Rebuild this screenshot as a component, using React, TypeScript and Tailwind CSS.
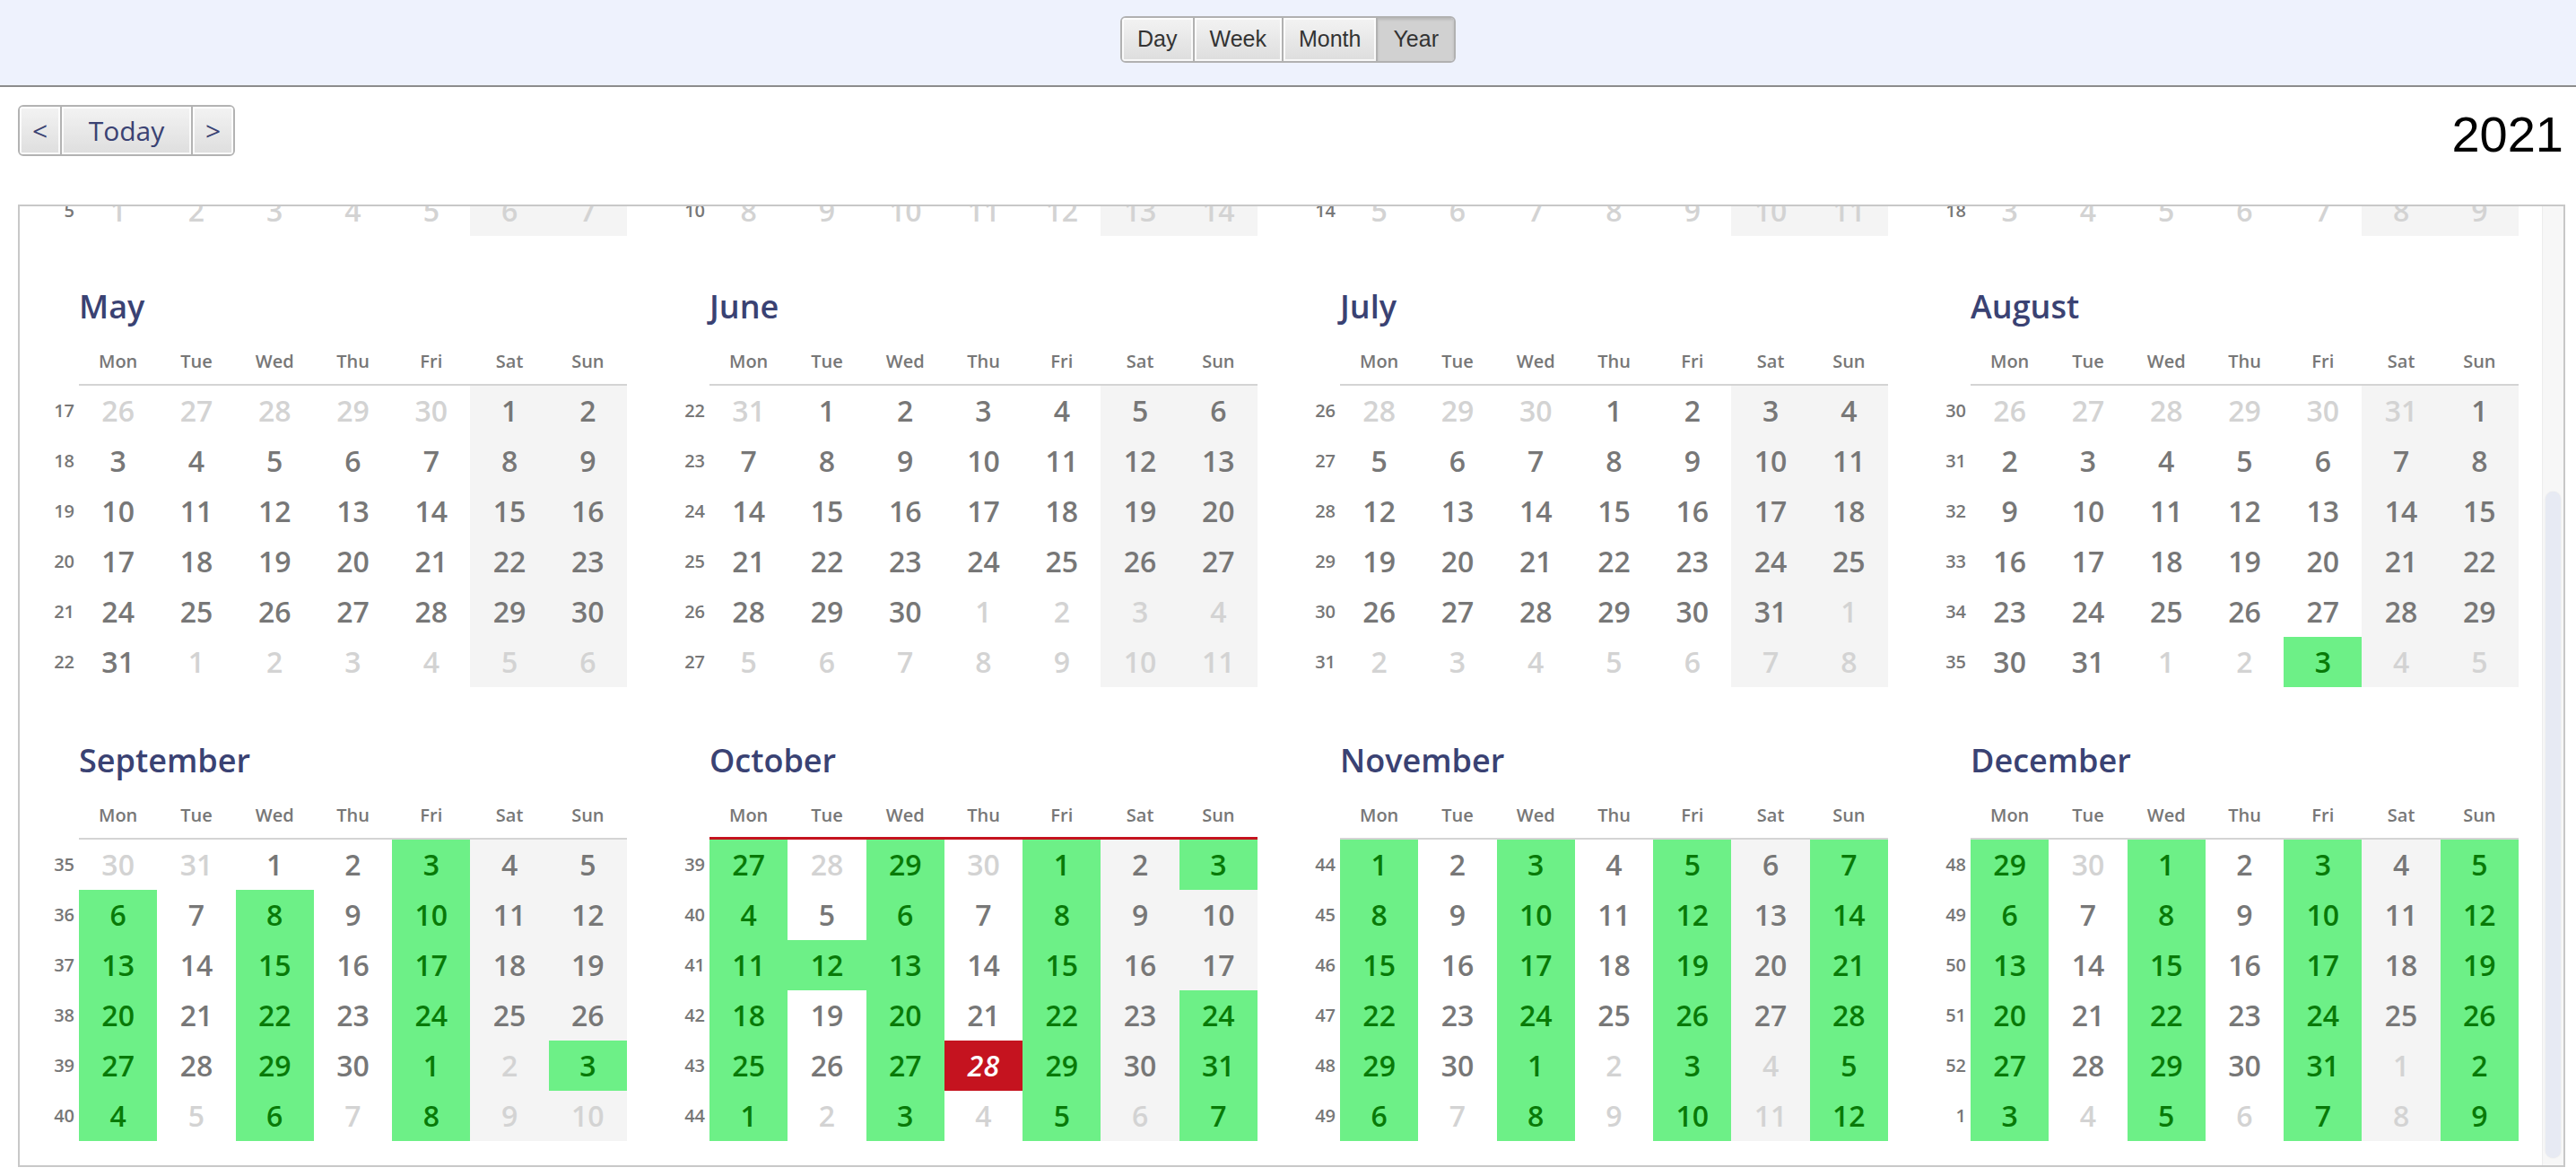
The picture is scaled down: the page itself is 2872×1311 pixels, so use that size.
import { useLayoutEffect, useRef } from 'react';

const MONTHS = ['January', 'February', 'March', 'April', 'May', 'June', 'July', 'August', 'September', 'October', 'November', 'December'];
const WEEKDAYS = ['Mon', 'Tue', 'Wed', 'Thu', 'Fri', 'Sat', 'Sun'];
const YEAR = 2021;
const DAY = 86400000;
const TODAY = Date.UTC(2021, 9, 28);

// iso week of a utc timestamp
function isoWeek(ts: number) {
  const d = new Date(ts);
  const dow = d.getUTCDay() || 7;
  const thu = new Date(ts + (4 - dow) * DAY);
  const start = Date.UTC(thu.getUTCFullYear(), 0, 1);
  return Math.ceil(((thu.getTime() - start) / DAY + 1) / 7);
}

// days with a booking
function isBooked(ts: number) {
  const d = new Date(ts);
  const dow = d.getUTCDay();
  if (ts === Date.UTC(2021, 8, 3) || ts === Date.UTC(2021, 9, 3) || ts === Date.UTC(2021, 9, 12)) return true;
  if (ts >= Date.UTC(2021, 8, 6) && ts <= Date.UTC(2021, 9, 22)) return dow === 1 || dow === 3 || dow === 5;
  if (ts >= Date.UTC(2021, 9, 24)) return dow === 1 || dow === 3 || dow === 5 || dow === 0;
  return false;
}

function buildWeeks(month: number) {
  const first = Date.UTC(YEAR, month, 1);
  const dow = new Date(first).getUTCDay() || 7;
  const start = first - (dow - 1) * DAY;
  const weeks: { week: number; days: number[] }[] = [];
  for (let w = 0; w < 6; w++) {
    const days: number[] = [];
    for (let i = 0; i < 7; i++) days.push(start + (w * 7 + i) * DAY);
    weeks.push({ week: isoWeek(days[0]), days });
  }
  return weeks;
}

function Month({ month }: { month: number }) {
  const weeks = buildWeeks(month);
  const hasToday = weeks.some((w) => w.days.includes(TODAY));

  return (
    <div className={`w-[703px] shrink-0 ${month >= 4 && month < 8 ? 'pt-[54px]' : 'pt-[57px]'}`}>
      <div className="pl-[66px] h-[49px] text-[36px] leading-[49px] font-semibold text-[#3a4273]">{MONTHS[month]}</div>
      <div className="ml-[66px] mt-[23px] mb-[12px] w-[611px] h-[27px] grid grid-cols-7 text-[20px] leading-[27px] font-semibold text-[#777]">
        {WEEKDAYS.map((d) => (
          <div key={d} className="text-center">{d}</div>
        ))}
      </div>
      {hasToday ? (
        <div className="ml-[66px] w-[611px] h-[3px] -mt-px bg-[#c5131f]" />
      ) : (
        <div className="ml-[66px] w-[611px] h-[2px] bg-[#d4d4d4]" />
      )}
      {weeks.map((w) => (
        <div key={w.days[0]} className="flex h-[56px]">
          <div className="w-[66px] pr-[5px] flex items-center justify-end text-[20px] font-semibold text-[#777]">{w.week}</div>
          <div className="w-[611px] grid grid-cols-7">
            {w.days.map((ts, i) => {
              const d = new Date(ts);
              const inMonth = d.getUTCMonth() === month;
              const weekend = i >= 5;
              const today = ts === TODAY;
              const booked = isBooked(ts);
              let cls = 'bg-white ' + (inMonth ? 'text-[#777]' : 'text-[#d3d3d3]');
              if (weekend) cls = 'bg-[#f4f4f4] ' + (inMonth ? 'text-[#777]' : 'text-[#d3d3d3]');
              if (booked) cls = 'bg-[#6df087] text-[#087a08]';
              if (today) cls = 'bg-[#c5131f] text-white italic font-bold';
              return (
                <div key={ts} className={`flex items-center justify-center text-[32px] font-semibold ${cls}`}>
                  {d.getUTCDate()}
                </div>
              );
            })}
          </div>
        </div>
      ))}
    </div>
  );
}

export default function App() {
  const scrollRef = useRef<HTMLDivElement>(null);

  useLayoutEffect(() => {
    if (scrollRef.current) scrollRef.current.scrollTop = scrollRef.current.scrollHeight;
  }, []);

  const views = ['Day', 'Week', 'Month', 'Year'];

  return (
    <div className="w-full h-[1311px] overflow-hidden bg-white font-['Open_Sans',sans-serif]">
      <div className="h-[97px] bg-[#eef2fd] border-b-2 border-[#8c8c8c] flex justify-center pt-[18px]">
        <div className="flex h-[52px] border-2 border-[#b1b1b1] rounded-[6px] overflow-hidden font-['Liberation_Sans',Arial,sans-serif] text-[25px] text-[#333]">
          {views.map((v, i) => (
            <button
              key={v}
              className={`px-[17px] flex items-center ${i > 0 ? 'border-l-2 border-[#b1b1b1]' : ''} ${
                v === 'Year'
                  ? 'bg-[#d1d1d1] shadow-[inset_0_2px_3px_rgba(0,0,0,0.12)]'
                  : 'bg-linear-to-b from-[#f3f3f3] to-[#dddddd] shadow-[inset_0_0_0_2px_rgba(255,255,255,0.8)]'
              }`}
            >
              {v}
            </button>
          ))}
        </div>
      </div>

      <div className="flex justify-between items-start pl-[20px] pr-[14px] pt-[20px]">
        <div className="flex h-[57px] border-2 border-[#b3b3b3] rounded-[6px] overflow-hidden text-[30px] text-[#3a4273]">
          <button className="w-[45px] flex items-center justify-center bg-linear-to-b from-[#f3f3f3] to-[#dedede] shadow-[inset_0_0_0_2px_rgba(255,255,255,0.8)]">&lt;</button>
          <button className="w-[146px] border-l-2 border-[#b3b3b3] flex items-center justify-center bg-linear-to-b from-[#f3f3f3] to-[#dedede] shadow-[inset_0_0_0_2px_rgba(255,255,255,0.8)]">Today</button>
          <button className="w-[47px] border-l-2 border-[#b3b3b3] flex items-center justify-center bg-linear-to-b from-[#f3f3f3] to-[#dedede] shadow-[inset_0_0_0_2px_rgba(255,255,255,0.8)]">&gt;</button>
        </div>
        <div className="mt-[5px] text-[56px] leading-[56px] text-black font-['Liberation_Sans',Arial,sans-serif]">2021</div>
      </div>

      <div className="ml-[20px] mt-[50px] w-[2840px] h-[1073px] border-2 border-[#c8c8c8] flex">
        <div ref={scrollRef} className="w-[2812px] h-full overflow-hidden">
          <div className="pb-[27px]">
            {[0, 4, 8].map((q) => (
              <div key={q} className="flex">
                {[0, 1, 2, 3].map((m) => (
                  <Month key={m} month={q + m} />
                ))}
              </div>
            ))}
          </div>
        </div>
        {/* scrollbar */}
        <div className="w-[24px] h-full bg-[#f7f7f7] border-l border-[#ededed] flex flex-col px-[3px] pt-[318px] pb-[8px]">
          <div className="flex-1 rounded-full bg-[#e7eaf3] shadow-[0_0_2px_rgba(0,0,0,0.08)]" />
        </div>
      </div>
    </div>
  );
}
